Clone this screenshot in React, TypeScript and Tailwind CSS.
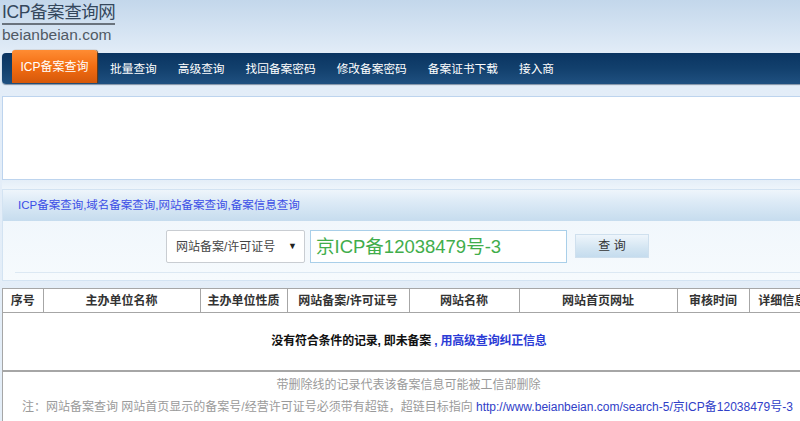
export default function App() {
  const navItems = ["批量查询", "高级查询", "找回备案密码", "修改备案密码", "备案证书下载", "接入商"];
  const cols: { label: string; w: string }[] = [
    { label: "序号", w: "w-[40px]" },
    { label: "主办单位名称", w: "w-[157px]" },
    { label: "主办单位性质", w: "w-[87px]" },
    { label: "网站备案/许可证号", w: "w-[122px]" },
    { label: "网站名称", w: "w-[110px]" },
    { label: "网站首页网址", w: "w-[158px]" },
    { label: "审核时间", w: "w-[72px]" },
    { label: "详细信息", w: "w-[66px]" },
  ];
  return (
    <div className="w-[800px] h-[421px] overflow-hidden bg-[linear-gradient(to_bottom,#c3d7eb_0px,#e3edf8_55px,#e4eef8_100%)] font-['Liberation_Sans','Noto_Sans_CJK_SC',sans-serif]">
      <div className="w-[814px] pl-[2px]">
        {/* Logo */}
        <div className="h-[50px] pt-[1px]">
          <div className="inline-block border-b-2 border-[#6a737d] text-[17.5px] leading-[21px] text-[#34475c] tracking-[-0.4px]">
            ICP备案查询网
          </div>
          <div className="text-[15.5px] leading-[18px] text-[#505a64] mt-[1px]">beianbeian.com</div>
        </div>

        {/* Nav */}
        <div className="mt-[3px] flex items-start h-[31px] rounded-l-[4px] bg-[linear-gradient(to_bottom,#0a3461,#12406d_50%,#1f5080)] shadow-[0_1px_1px_#7f90a3]">
          <div className="-mt-[3px] ml-[10px] h-[33px] w-[85px] rounded-t-[3px] bg-[linear-gradient(to_bottom,#ff8c33,#f36d12_50%,#d5580a)] flex items-center justify-center text-white text-[12px] shadow-[1px_0_1px_#6b3a10]">
            ICP备案查询
          </div>
          <div className="ml-[13px] flex h-[31px] items-center gap-[21px] text-white text-[11.7px]">
            {navItems.map((n) => (
              <span key={n}>{n}</span>
            ))}
          </div>
        </div>

        <div className="h-[12px]" />
        {/* Empty white box */}
        <div className="h-[84px] border border-[#bdd4ee] bg-white" />
        <div className="h-[9px] bg-[linear-gradient(to_bottom,#e4eef8,#eef5fb)]" />

        {/* Search section */}
        <div className="border border-[#d3e3f2] bg-[#f3f8fc]">
          <div className="h-[31px] flex items-center pl-[15px] bg-[linear-gradient(to_bottom,#eef5fb,#dceaf6_40%,#c6dcee)] text-[11.5px] text-[#3b4ee6]">
            ICP备案查询,域名备案查询,网站备案查询,备案信息查询
          </div>
          <div className="bg-[linear-gradient(to_bottom,#f1f7fc,#f6fafd)] pt-[9px] pb-[7px]">
            <div className="flex items-start">
              <div className="ml-[163px] w-[139px] h-[33px] rounded-[2px] border border-[#c9cdd2] bg-white flex items-center pl-[9px] pr-[7px] text-[12px] text-[#444]">
                <span className="flex-1">网站备案/许可证号</span>
                <span className="text-[9px] text-[#222]">▼</span>
              </div>
              <div className="ml-[5px] w-[257px] h-[33px] border border-[#a9cfe9] bg-white flex items-center pl-[5px] text-[18.5px] text-[#41ad4b]">
                京ICP备12038479号-3
              </div>
              <div className="ml-[8px] mt-[4px] w-[74px] h-[24px] border border-[#cfe0ee] bg-[linear-gradient(to_bottom,#eef5fb,#d3e5f2_60%,#c5dcee)] flex items-center justify-center text-[12px] text-[#333]">
                查 询
              </div>
            </div>
            <div className="mt-[9px] ml-[12px] h-px bg-[#dce8f3]" />
          </div>
        </div>

        <div className="h-[7px]" />

        {/* Table */}
        <div className="bg-white border-l border-[#a6a6a6]">
          <table className="w-[812px] border-collapse table-fixed">
            <thead>
              <tr className="h-[24px]">
                {cols.map((c, i) => (
                  <th
                    key={c.label}
                    className={`${c.w} border-t border-b border-[#a6a6a6] ${i > 0 ? "border-l" : ""} text-[12px] font-bold text-[#333] p-0 text-center whitespace-nowrap overflow-hidden`}
                  >
                    {c.label}
                  </th>
                ))}
              </tr>
            </thead>
            <tbody>
              <tr className="h-[58px]">
                <td colSpan={8} className="border-b-2 border-[#a6a6a6] text-center text-[12px] font-bold text-[#111] p-0 tracking-[-0.2px]">
                  没有符合条件的记录, 即未备案<span className="text-[#2b3bd6]"> , 用高级查询纠正信息</span>
                </td>
              </tr>
            </tbody>
          </table>
          <div className="pt-[4px] h-[60px]">
            <div className="text-center text-[12px] leading-[18px] text-[#9a9a9a]">带删除线的记录代表该备案信息可能被工信部删除</div>
            <div className="mt-[4px] pl-[19px] text-[12px] leading-[18px] text-[#9a9a9a] whitespace-nowrap">
              注：网站备案查询 网站首页显示的备案号/经营许可证号必须带有超链，超链目标指向{" "}
              <span className="text-[#3040c8]">http://www.beianbeian.com/search-5/京ICP备12038479号-3</span>
            </div>
          </div>
        </div>
      </div>
    </div>
  );
}
